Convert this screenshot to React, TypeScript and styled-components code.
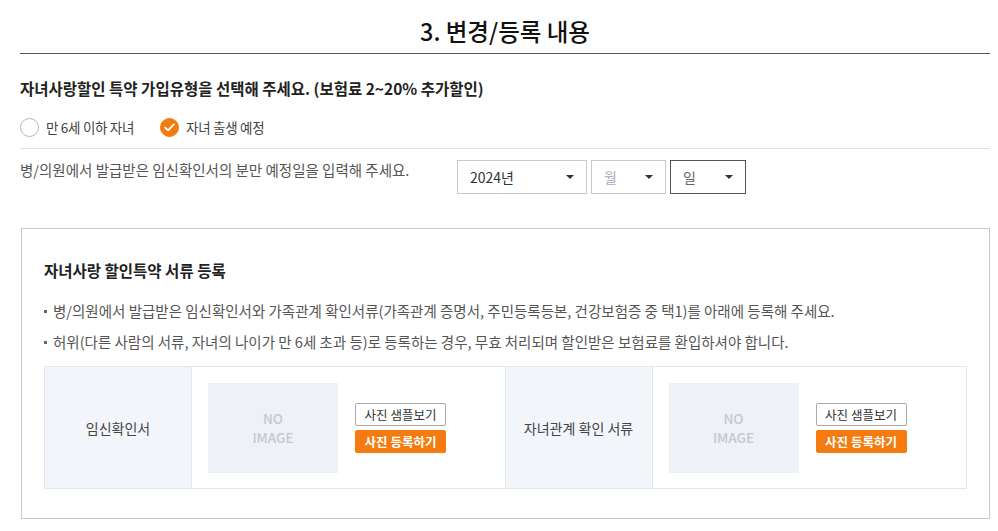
import styled, { createGlobalStyle } from "styled-components";

const GlobalStyle = createGlobalStyle`
  html, body {
    margin: 0;
    padding: 0;
    background: #fff;
  }
  body {
    font-family: "Noto Sans CJK KR", "Noto Sans", sans-serif;
    color: #222;
  }
`;

const Page = styled.div`
  width: 970px;
  padding: 0 8px 0 20px;
`;

const Header = styled.header`
  padding: 16px 0 7px;
  border-bottom: 1px solid #555;
  text-align: center;
`;

const Title = styled.h2`
  margin: 0;
  font-size: 23.5px;
  line-height: 30px;
  font-weight: 500;
  color: #111;
`;

const Question = styled.h3`
  margin: 23px 0 0;
  font-size: 15.5px;
  line-height: 22px;
  font-weight: 700;
  color: #222;
`;

const RadioRow = styled.div`
  display: flex;
  gap: 26px;
  margin-top: 17px;
  padding-bottom: 10px;
  border-bottom: 1px solid #e2e2e2;
`;

const RadioLabel = styled.label`
  display: flex;
  align-items: center;
  gap: 7px;
  font-size: 13.5px;
  line-height: 22px;
  color: #444;
  letter-spacing: -0.3px;
`;

const RadioMark = styled.span<{ $checked?: boolean }>`
  display: flex;
  align-items: center;
  justify-content: center;
  width: 19px;
  height: 19px;
  box-sizing: border-box;
  border-radius: 50%;
  border: 1px solid ${(p) => (p.$checked ? "#f47b10" : "#b8b8b8")};
  background: ${(p) => (p.$checked ? "#f47b10" : "#fff")};
`;

const DateRow = styled.div`
  display: grid;
  grid-template-columns: 437px auto;
  padding-top: 11px;
`;

const DateText = styled.p`
  margin: 0;
  font-size: 14.5px;
  line-height: 20px;
  color: #555;
`;

const Selects = styled.div`
  display: flex;
  gap: 4px;
`;

const Select = styled.div<{ $width: number; $active?: boolean }>`
  display: flex;
  align-items: center;
  justify-content: space-between;
  box-sizing: border-box;
  width: ${(p) => p.$width}px;
  height: 34px;
  padding: 0 12px;
  border: 1px solid ${(p) => (p.$active ? "#555" : "#c9c9c9")};
  font-size: 14px;
  color: #333;
  background: #fff;
`;

const Caret = styled.span`
  width: 0;
  height: 0;
  border-left: 4px solid transparent;
  border-right: 4px solid transparent;
  border-top: 4px solid #333;
`;

const DocBox = styled.section`
  margin: 34px 0 0 1px;
  padding: 30px 22px 29px;
  border: 1px solid #c9c9c9;
`;

const DocTitle = styled.h4`
  margin: 0;
  font-size: 15.5px;
  line-height: 22px;
  font-weight: 700;
  color: #222;
`;

const NoteList = styled.ul`
  list-style: none;
  margin: 20px 0 0;
  padding: 0;
  display: flex;
  flex-direction: column;
  gap: 11px;
`;

const Note = styled.li`
  position: relative;
  padding-left: 9px;
  font-size: 14.5px;
  line-height: 20px;
  color: #555;

  &::before {
    content: "";
    position: absolute;
    left: 0;
    top: 9px;
    width: 3px;
    height: 3px;
    background: #666;
  }
`;

const UploadTable = styled.div`
  display: grid;
  grid-template-columns: 147px 1fr 147px 1fr;
  margin-top: 14px;
  border: 1px solid #e3e6ea;
`;

const LabelCell = styled.div`
  display: flex;
  align-items: center;
  justify-content: center;
  height: 121px;
  background: #f2f5fa;
  border-right: 1px solid #e3e6ea;
  font-size: 14px;
  color: #444;
`;

const ContentCell = styled.div<{ $last?: boolean }>`
  display: flex;
  align-items: center;
  gap: 17px;
  padding: 0 16px;
  border-right: ${(p) => (p.$last ? "none" : "1px solid #e3e6ea")};
`;

const NoImage = styled.div`
  display: flex;
  flex-direction: column;
  align-items: center;
  justify-content: center;
  width: 130px;
  height: 90px;
  background: #eef1f6;
  font-size: 13.5px;
  font-weight: 500;
  color: #c3c8d1;
`;

const NoImageLine = styled.span`
  display: block;
  line-height: 19px;
`;

const ButtonStack = styled.div`
  display: flex;
  flex-direction: column;
  gap: 4px;
`;

const PhotoButton = styled.button<{ $primary?: boolean }>`
  width: 91px;
  height: 23px;
  padding: 0;
  box-sizing: border-box;
  border: 1px solid ${(p) => (p.$primary ? "#f47b10" : "#a9a9a9")};
  border-radius: 2px;
  background: ${(p) => (p.$primary ? "#f47b10" : "#fff")};
  color: ${(p) => (p.$primary ? "#fff" : "#333")};
  font-family: "Noto Sans CJK KR", sans-serif;
  font-size: 12.5px;
  font-weight: ${(p) => (p.$primary ? 700 : 400)};
`;

const Check = () => (
  <svg width="11" height="9" viewBox="0 0 11 9" fill="none">
    <path d="M1.2 4.6L4.1 7.4L9.8 1.4" stroke="#fff" strokeWidth="1.8" strokeLinecap="round" strokeLinejoin="round" />
  </svg>
);

const UploadSlot = ({ label, last }: { label: string; last?: boolean }) => (
  <>
    <LabelCell>{label}</LabelCell>
    <ContentCell $last={last}>
      <NoImage>
        <NoImageLine>NO</NoImageLine>
        <NoImageLine>IMAGE</NoImageLine>
      </NoImage>
      <ButtonStack>
        <PhotoButton>사진 샘플보기</PhotoButton>
        <PhotoButton $primary>사진 등록하기</PhotoButton>
      </ButtonStack>
    </ContentCell>
  </>
);

export default function App() {
  return (
    <Page>
      <GlobalStyle />
      <Header>
        <Title>3. 변경/등록 내용</Title>
      </Header>

      <Question>자녀사랑할인 특약 가입유형을 선택해 주세요. (보험료 2~20% 추가할인)</Question>

      <RadioRow>
        <RadioLabel>
          <RadioMark />
          만 6세 이하 자녀
        </RadioLabel>
        <RadioLabel>
          <RadioMark $checked>
            <Check />
          </RadioMark>
          자녀 출생 예정
        </RadioLabel>
      </RadioRow>

      <DateRow>
        <DateText>병/의원에서 발급받은 임신확인서의 분만 예정일을 입력해 주세요.</DateText>
        <Selects>
          <Select $width={130}>
            2024년
            <Caret />
          </Select>
          <Select $width={75}>
            <span style={{ color: "#aab" }}>월</span>
            <Caret />
          </Select>
          <Select $width={76} $active>
            <span style={{ color: "#666" }}>일</span>
            <Caret />
          </Select>
        </Selects>
      </DateRow>

      <DocBox>
        <DocTitle>자녀사랑 할인특약 서류 등록</DocTitle>
        <NoteList>
          <Note>
            병/의원에서 발급받은 임신확인서와 가족관계 확인서류(가족관계 증명서, 주민등록등본, 건강보험증 중 택1)를 아래에 등록해 주세요.
          </Note>
          <Note>
            허위(다른 사람의 서류, 자녀의 나이가 만 6세 초과 등)로 등록하는 경우, 무효 처리되며 할인받은 보험료를 환입하셔야 합니다.
          </Note>
        </NoteList>
        <UploadTable>
          <UploadSlot label="임신확인서" />
          <UploadSlot label="자녀관계 확인 서류" last />
        </UploadTable>
      </DocBox>
    </Page>
  );
}
